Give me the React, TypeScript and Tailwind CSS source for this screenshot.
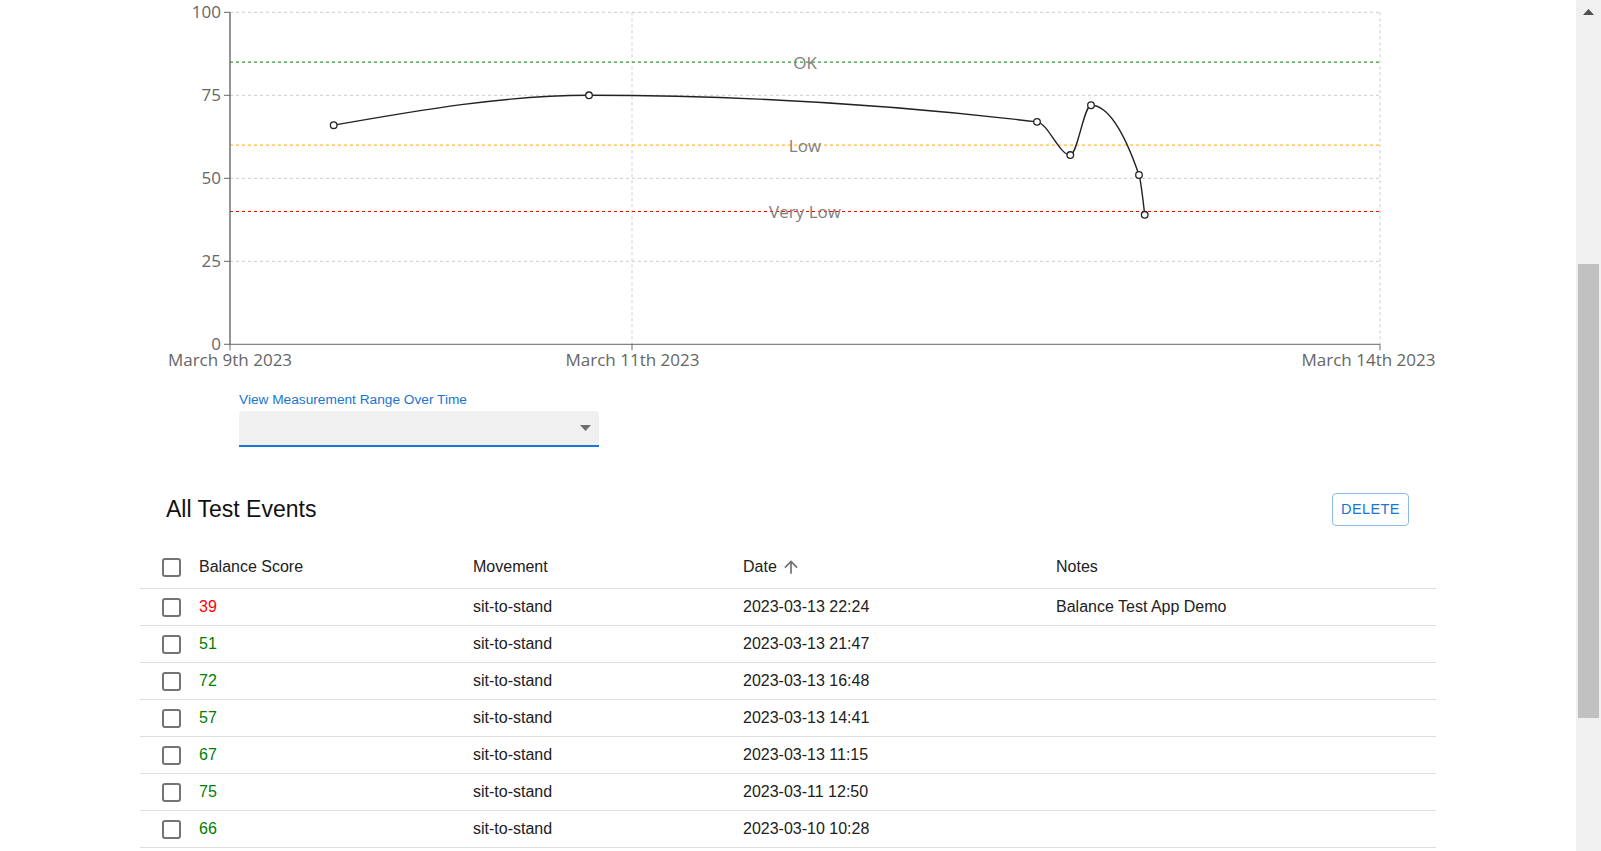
import React from "react"

// chart geometry, in page pixels
const LEFT = 230
const RIGHT = 1380
const Y0 = 344.3
const yOf = (v: number) => Y0 - v * 3.32

const points = [
	{ x: 333.7, v: 66 },
	{ x: 589, v: 75 },
	{ x: 1037, v: 67 },
	{ x: 1070.3, v: 57 },
	{ x: 1091, v: 72 },
	{ x: 1139, v: 51 },
	{ x: 1144.7, v: 39 },
]

const rows = [
	{ score: 39, date: "2023-03-13 22:24", notes: "Balance Test App Demo" },
	{ score: 51, date: "2023-03-13 21:47", notes: "" },
	{ score: 72, date: "2023-03-13 16:48", notes: "" },
	{ score: 57, date: "2023-03-13 14:41", notes: "" },
	{ score: 67, date: "2023-03-13 11:15", notes: "" },
	{ score: 75, date: "2023-03-11 12:50", notes: "" },
	{ score: 66, date: "2023-03-10 10:28", notes: "" },
]

// same idea as d3 curveMonotoneX
function monotonePath(pts: { x: number; y: number }[]) {
	const n = pts.length
	const sl: number[] = []
	for (let i = 0; i < n - 1; i++) {
		sl.push((pts[i + 1].y - pts[i].y) / (pts[i + 1].x - pts[i].x))
	}
	const m: number[] = new Array(n).fill(0)
	for (let i = 1; i < n - 1; i++) {
		const h0 = pts[i].x - pts[i - 1].x
		const h1 = pts[i + 1].x - pts[i].x
		const s0 = sl[i - 1]
		const s1 = sl[i]
		const p = (s0 * h1 + s1 * h0) / (h0 + h1)
		m[i] =
			(Math.sign(s0) + Math.sign(s1)) *
				Math.min(Math.abs(s0), Math.abs(s1), 0.5 * Math.abs(p)) || 0
	}
	m[0] = (3 * sl[0] - m[1]) / 2
	m[n - 1] = (3 * sl[n - 2] - m[n - 2]) / 2
	let d = `M${pts[0].x},${pts[0].y}`
	for (let i = 0; i < n - 1; i++) {
		const dx = (pts[i + 1].x - pts[i].x) / 3
		d += `C${pts[i].x + dx},${pts[i].y + dx * m[i]} ${pts[i + 1].x - dx},${
			pts[i + 1].y - dx * m[i + 1]
		} ${pts[i + 1].x},${pts[i + 1].y}`
	}
	return d
}

function Chart() {
	const pts = points.map((p) => ({ x: p.x, y: yOf(p.v) }))
	const font = { fontFamily: "'Open Sans', 'Noto Sans', sans-serif", fontSize: 17 }
	const refs = [
		{ v: 85, color: "#008000", label: "OK" },
		{ v: 60, color: "#ffa500", label: "Low" },
		{ v: 40, color: "#ff0000", label: "Very Low" },
	]
	return (
		<svg width={1296} height={380} viewBox="140 0 1296 380" className="block">
			{/* grid */}
			{[100, 75, 50, 25].map((v) => (
				<line key={v} x1={LEFT} x2={RIGHT} y1={yOf(v)} y2={yOf(v)} stroke="#ccc" strokeDasharray="3 3" />
			))}
			{[632, RIGHT].map((x) => (
				<line key={x} x1={x} x2={x} y1={yOf(100)} y2={Y0} stroke="#ccc" strokeDasharray="3 3" />
			))}
			{/* reference lines */}
			{refs.map((r) => (
				<g key={r.label}>
					<line x1={LEFT} x2={RIGHT} y1={yOf(r.v)} y2={yOf(r.v)} stroke={r.color} strokeDasharray="3 3" />
					<text x={805} y={yOf(r.v) + 6.5} textAnchor="middle" fill="#808080" style={font}>
						{r.label}
					</text>
				</g>
			))}
			{/* axes */}
			<line x1={LEFT} x2={LEFT} y1={yOf(100)} y2={Y0} stroke="#666" strokeWidth={1.4} />
			<line x1={LEFT} x2={RIGHT} y1={Y0} y2={Y0} stroke="#666" />
			{[100, 75, 50, 25, 0].map((v) => (
				<g key={v}>
					<line x1={LEFT - 6} x2={LEFT} y1={yOf(v)} y2={yOf(v)} stroke="#666" />
					<text x={LEFT - 9} y={yOf(v) + 6} textAnchor="end" fill="#666" style={font}>
						{v}
					</text>
				</g>
			))}
			{[
				{ x: LEFT, cx: 230, t: "March 9th 2023" },
				{ x: 632, cx: 632.5, t: "March 11th 2023" },
				{ x: RIGHT, cx: 1368.5, t: "March 14th 2023" },
			].map((t) => (
				<g key={t.t}>
					<line x1={t.x} x2={t.x} y1={Y0} y2={Y0 + 6} stroke="#666" />
					<text x={t.cx} y={366} textAnchor="middle" fill="#666" style={font}>
						{t.t}
					</text>
				</g>
			))}
			{/* data */}
			<path d={monotonePath(pts)} fill="none" stroke="#222" strokeWidth={1.4} />
			{pts.map((p) => (
				<circle key={p.x} cx={p.x} cy={p.y} r={3.3} fill="#fff" stroke="#222" strokeWidth={1.3} />
			))}
		</svg>
	)
}

function Box() {
	return <span className="block h-[19px] w-[19px] rounded-[3px] border-2 border-[#747474]" />
}

const grid = "grid grid-cols-[59px_274px_270px_313px_1fr] items-center"

export default function App() {
	return (
		<div
			className="flex h-[851px] w-full overflow-hidden bg-white text-[#212121]"
			style={{ fontFamily: "'Liberation Sans', Arial, sans-serif" }}
		>
			<div className="min-w-0 flex-1">
				<div className="ml-[140px] w-[1296px]">
					<Chart />

					<div className="ml-[99px] mt-[12px] w-[360px]">
						<div className="text-[13.7px] leading-[16px] text-[#1976d2]">
							View Measurement Range Over Time
						</div>
						<div className="mt-[3px] flex h-[36px] items-center justify-end rounded-t-[4px] border-b-2 border-[#1976d2] bg-[#f0f0f0] pr-[8px]">
							<svg width="11" height="6" viewBox="0 0 11 6">
								<path d="M0 0 L11 0 L5.5 6 Z" fill="#6e6e6e" />
							</svg>
						</div>
					</div>

					<div className="mt-[46px] flex h-[33px] items-center justify-between pl-[26px] pr-[27px]">
						<h2 className="text-[23px] leading-[33px] text-[#111]">All Test Events</h2>
						<button
							type="button"
							className="flex h-[33px] w-[77px] items-center justify-center rounded-[4px] border border-[#8dbbe9] text-[14.5px] tracking-[0.4px] text-[#1976d2]"
						>
							DELETE
						</button>
					</div>

					<div className="mt-[20px] text-[16px]">
						<div className={`${grid} h-[43px] border-b border-[#e0e0e0]`}>
							<div className="pl-[22px]">
								<Box />
							</div>
							<div>Balance Score</div>
							<div>Movement</div>
							<div className="flex items-center">
								Date
								<svg width="20" height="20" viewBox="0 0 24 24" className="ml-[4px]">
									<path
										d="M4 12l1.41 1.41L11 7.83V20h2V7.83l5.58 5.59L20 12l-8-8-8 8z"
										fill="#707070"
									/>
								</svg>
							</div>
							<div>Notes</div>
						</div>
						{rows.map((r) => (
							<div key={r.date} className={`${grid} h-[37px] border-b border-[#e0e0e0]`}>
								<div className="pl-[22px]">
									<Box />
								</div>
								<div className={r.score < 40 ? "text-[#ff0000]" : "text-[#008000]"}>{r.score}</div>
								<div>sit-to-stand</div>
								<div>{r.date}</div>
								<div>{r.notes}</div>
							</div>
						))}
					</div>
				</div>
			</div>

			{/* page scrollbar */}
			<div className="flex w-[25px] shrink-0 flex-col items-center bg-[#f0f0f0]">
				<svg width="11" height="6" viewBox="0 0 11 6" className="mt-[9px]">
					<path d="M5.5 0 L11 6 L0 6 Z" fill="#505050" />
				</svg>
				<div className="mt-[249px] h-[454px] w-[21px] bg-[#c1c1c1]" />
			</div>
		</div>
	)
}
